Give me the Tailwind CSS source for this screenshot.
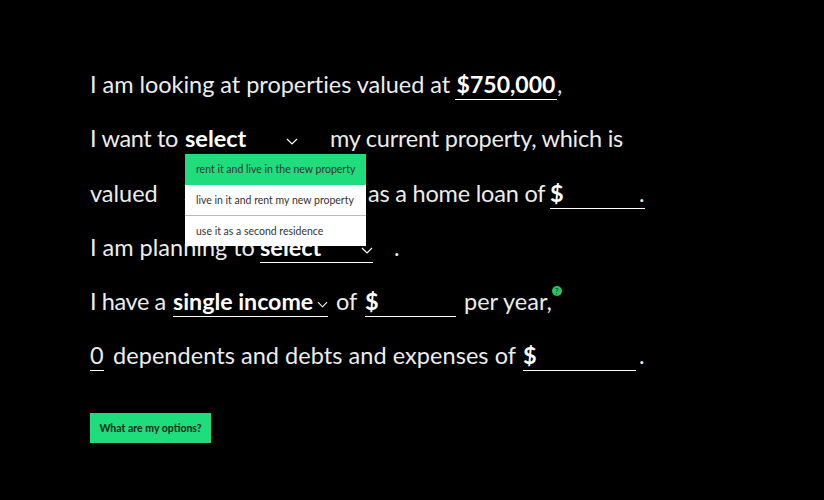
<!DOCTYPE html>
<html lang="en">
<head>
<meta charset="UTF-8">
<title>Options</title>
<script src="https://cdn.jsdelivr.net/npm/@tailwindcss/browser@4"></script>
</head>
<body class="bg-black">
<div class="w-[824px] h-[500px] overflow-hidden pl-[90px] pt-[57px] text-[23.5px] leading-[54.3px] text-[#ececec] font-['Lato','Noto_Sans',sans-serif]">
  <div class="flex h-[54.3px]">
    <span class="w-[365px] tracking-[-0.03px]">I am looking at properties valued at</span>
    <span class="w-[102px] h-[43px] border-b border-white font-bold text-[23px] text-white text-center">$750,000</span>
    <span>,</span>
  </div>
  <div class="flex h-[54.3px]">
    <span class="w-[95px] tracking-[-0.35px]">I want to</span>
    <div class="relative w-[145px] font-bold text-white">
      <span>select</span>
      <svg class="absolute left-[101px] top-[27px]" width="12" height="7" viewBox="0 0 12 7" fill="none" stroke="#fff" stroke-width="1.2"><path d="M1 1l5 5 5-5"/></svg>
      <div class="absolute z-10 left-0 top-[43px] w-[181px] bg-white text-[10.5px] leading-[31px] font-normal text-[#333]">
        <div class="h-[31px] pl-[11px] bg-[#1fdc7c]">rent it and live in the new property</div>
        <div class="h-[31px] pl-[11px] border-b border-[#bbb]">live in it and rent my new property</div>
        <div class="h-[30px] pl-[11px]">use it as a second residence</div>
      </div>
    </div>
    <span class="tracking-[-0.24px]">my current property, which is</span>
  </div>
  <div class="flex h-[54.3px]">
    <span class="w-[94px]">valued</span>
    <span class="w-[184px] font-bold text-white">$</span>
    <span class="w-[182px] tracking-[-0.2px]">as a home loan of</span>
    <span class="w-[95px] h-[43px] border-b border-white font-bold text-white">$</span>
    <span class="-ml-[6px]">.</span>
  </div>
  <div class="flex h-[54.3px]">
    <span class="w-[170px]">I am planning to</span>
    <div class="relative w-[113px] h-[43px] border-b border-white font-bold text-white">
      <span>select</span>
      <svg class="absolute left-[101px] top-[27px]" width="12" height="7" viewBox="0 0 12 7" fill="none" stroke="#fff" stroke-width="1.2"><path d="M1 1l5 5 5-5"/></svg>
    </div>
    <span class="ml-[21px]">.</span>
  </div>
  <div class="flex h-[54.3px]">
    <span class="w-[83px] tracking-[-0.4px]">I have a</span>
    <div class="relative w-[155px] h-[43px] border-b border-white font-bold text-[23.2px] text-white">
      <span>single income</span>
      <svg class="absolute left-[144px] top-[27px]" width="11" height="7" viewBox="0 0 12 7" fill="none" stroke="#fff" stroke-width="1.2"><path d="M1 1l5 5 5-5"/></svg>
    </div>
    <span class="w-[29px] ml-[8px]">of</span>
    <span class="w-[91px] h-[43px] border-b border-white font-bold text-white">$</span>
    <span class="ml-[8px]">per year,</span>
    <div class="relative">
      <span class="absolute left-0 top-[12px] size-[10px] rounded-full bg-[#22c55e] text-[8px] leading-[10px] text-center text-[#0a3d20]">?</span>
    </div>
  </div>
  <div class="flex h-[54.3px]">
    <span class="w-[14px] h-[43px] border-b border-white">0</span>
    <span class="w-[410px] ml-[9px] tracking-[0.05px]">dependents and debts and expenses of</span>
    <span class="w-[113px] h-[43px] border-b border-white font-bold text-white">$</span>
    <span class="ml-[3px]">.</span>
  </div>
  <button class="block mt-[30px] w-[121px] h-[30px] bg-[#1fdc7c] text-[10.5px] leading-none font-bold text-[#0a2a18]">What are my options?</button>
</div>
</body>
</html>
